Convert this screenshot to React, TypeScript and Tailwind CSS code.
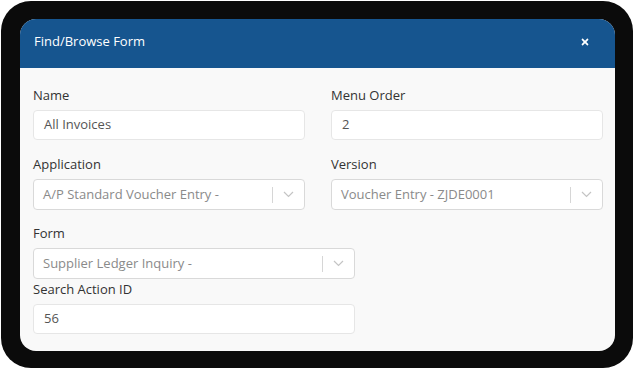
import React from 'react';
import { FaTimes } from 'react-icons/fa';

const font = { fontFamily: '"Open Sans", "Liberation Sans", sans-serif' };

const Label: React.FC<{ text: string }> = ({ text }) => (
  <div className="text-[13px] leading-[18px] text-[#333] mb-[6px]">{text}</div>
);

const TextInput: React.FC<{ value: string }> = ({ value }) => (
  <div className="h-[30px] bg-white border border-[#e6e6e6] rounded-[4px] flex items-center px-[10px] text-[13px] text-[#555]">
    {value}
  </div>
);

const SelectBox: React.FC<{ value: string }> = ({ value }) => (
  <div className="h-[31px] bg-white border border-[#d9d9d9] rounded-[4px] flex items-center text-[13px] text-[#8a8a8a]">
    <div className="flex-1 pl-[9px] truncate">{value}</div>
    <div className="w-px h-[16px] bg-[#d6d6d6]" />
    <div className="w-[31px] flex items-center justify-center">
      <svg width="11" height="7" viewBox="0 0 11 7" fill="none">
        <path d="M1 1l4.5 4.5L10 1" stroke="#c4c4c4" strokeWidth="1.2" />
      </svg>
    </div>
  </div>
);

export default function App() {
  return (
    <div className="w-[634px] h-[370px] bg-white p-px" style={font}>
      <div className="w-[632px] h-[367px] bg-[#0b0b0b] rounded-[30px] pt-[18px] pl-[19px] pr-[18px] pb-[17px]">
        <div className="h-[332px] rounded-[16px] overflow-hidden bg-[#f9f9f9] flex flex-col">
          <div className="h-[49px] bg-[#16558f] flex items-center justify-between pl-[14px] pr-[25px] pb-[4px] shrink-0">
            <span className="text-white text-[13px]">Find/Browse Form</span>
            <FaTimes className="text-white w-[10px] h-[10px]" />
          </div>
          <div className="px-[13px] pt-[18px] pr-[12px]">
            <div className="grid grid-cols-2 gap-x-[26px]">
              <div>
                <Label text="Name" />
                <TextInput value="All Invoices" />
              </div>
              <div>
                <Label text="Menu Order" />
                <TextInput value="2" />
              </div>
            </div>
            <div className="grid grid-cols-2 gap-x-[26px] mt-[15px]">
              <div>
                <Label text="Application" />
                <SelectBox value="A/P Standard Voucher Entry -" />
              </div>
              <div>
                <Label text="Version" />
                <SelectBox value="Voucher Entry - ZJDE0001" />
              </div>
            </div>
            <div className="w-[322px] mt-[14px]">
              <Label text="Form" />
              <SelectBox value="Supplier Ledger Inquiry -" />
              <div className="mt-[1px]">
                <Label text="Search Action ID" />
                <TextInput value="56" />
              </div>
            </div>
          </div>
        </div>
      </div>
    </div>
  );
}
